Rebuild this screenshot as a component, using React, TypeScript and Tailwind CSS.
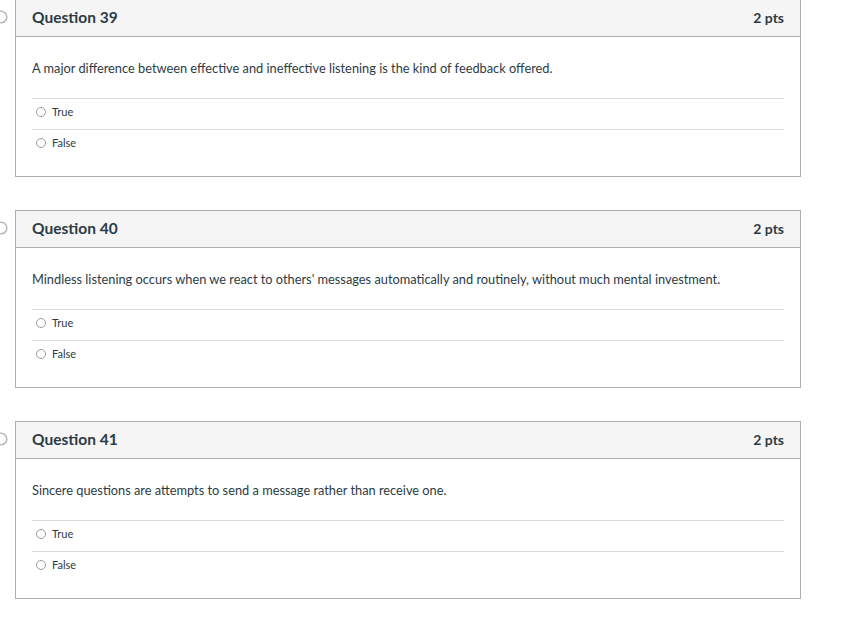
import React from 'react';

// 퀴즈 문항 데이터
const questions = [
  {
    id: 39,
    points: 2,
    text: 'A major difference between effective and ineffective listening is the kind of feedback offered.',
    answers: ['True', 'False'],
  },
  {
    id: 40,
    points: 2,
    text: "Mindless listening occurs when we react to others' messages automatically and routinely, without much mental investment.",
    answers: ['True', 'False'],
  },
  {
    id: 41,
    points: 2,
    text: 'Sincere questions are attempts to send a message rather than receive one.',
    answers: ['True', 'False'],
  },
];

const App: React.FC = () => {
  return (
    <div
      className="min-h-screen bg-white text-[#2d3b45]"
      style={{ fontFamily: 'Lato, "Open Sans", "Liberation Sans", sans-serif' }}
    >
      <div className="-mt-px flex flex-col gap-[33px]">
        {questions.map((q) => (
          <QuestionCard key={q.id} {...q} />
        ))}
      </div>
    </div>
  );
};

interface QuestionCardProps {
  id: number;
  points: number;
  text: string;
  answers: string[];
}

const QuestionCard: React.FC<QuestionCardProps> = ({ id, points, text, answers }) => {
  return (
    <div className="flex items-start">
      {/* 북마크 아이콘 (화면 왼쪽으로 잘림) */}
      <div className="w-[15px] shrink-0 overflow-hidden pt-[11px]">
        <svg className="-ml-[6px] block h-[14px] w-[14px]" viewBox="0 0 14 14" fill="none">
          <circle cx="7" cy="7" r="5.8" stroke="#b4bcc2" strokeWidth="1.6" />
        </svg>
      </div>

      <div className="w-[786px] shrink-0 border border-[#adadad] bg-white">
        <div className="flex h-[37px] items-center justify-between border-b border-[#adadad] bg-[#f5f5f5] px-4 pb-px">
          <h3 className="text-[15.5px] font-bold">Question {id}</h3>
          <span className="pb-px text-[14px] font-bold">{points} pts</span>
        </div>

        <div className="px-4 pb-4 pt-[21px]">
          <p className="mb-5 text-[12.8px] leading-5">{text}</p>
          {answers.map((a) => (
            <div key={a} className="flex h-[31px] items-start border-t border-[#dcdcdc] pt-[5px]">
              <label className="flex items-center text-[11px] leading-[16px]">
                <span className="ml-1 mr-[6px] inline-block h-[10px] w-[10px] rounded-full border border-[#969ea3] bg-white" />
                {a}
              </label>
            </div>
          ))}
        </div>
      </div>
    </div>
  );
};

export default App;
